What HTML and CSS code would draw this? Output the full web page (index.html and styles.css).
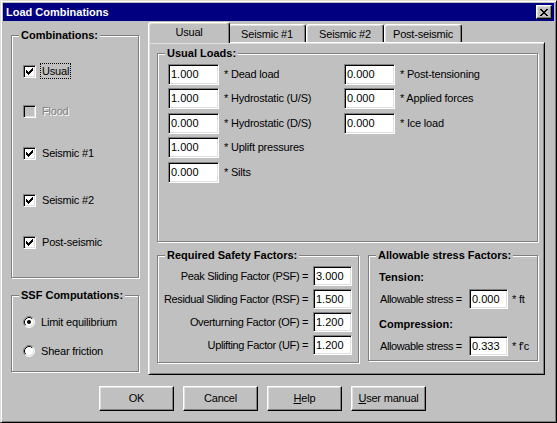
FILE: index.html
```html
<!DOCTYPE html>
<html>
<head>
<meta charset="utf-8">
<title>Load Combinations</title>
<link rel="stylesheet" href="styles.css">
</head>
<body>
<div class="window">
  <div class="titlebar">
    <span class="title">Load Combinations</span>
    <span class="close">
      <svg width="8" height="7" viewBox="0 0 8 7" shape-rendering="crispEdges">
        <rect x="0" y="0" width="2" height="1"/><rect x="6" y="0" width="2" height="1"/>
        <rect x="1" y="1" width="2" height="1"/><rect x="5" y="1" width="2" height="1"/>
        <rect x="2" y="2" width="4" height="1"/>
        <rect x="3" y="3" width="2" height="1"/>
        <rect x="2" y="4" width="4" height="1"/>
        <rect x="1" y="5" width="2" height="1"/><rect x="5" y="5" width="2" height="1"/>
        <rect x="0" y="6" width="2" height="1"/><rect x="6" y="6" width="2" height="1"/>
      </svg>
    </span>
  </div>

  <div class="main">
    <div class="left">
      <div class="group combos">
        <span class="group-label">Combinations:</span>
        <div class="crow">
          <span class="check"><svg class="tick" width="7" height="7" viewBox="0 0 7 7" shape-rendering="crispEdges"><rect x="6" y="0" width="1" height="1"/><rect x="5" y="1" width="2" height="1"/><rect x="0" y="2" width="1" height="1"/><rect x="4" y="2" width="3" height="1"/><rect x="0" y="3" width="2" height="1"/><rect x="3" y="3" width="3" height="1"/><rect x="0" y="4" width="5" height="1"/><rect x="1" y="5" width="3" height="1"/><rect x="2" y="6" width="1" height="1"/></svg></span>
          <span class="clabel focus">Usual</span>
        </div>
        <div class="crow">
          <span class="check disabled"></span>
          <span class="clabel dis">Flood</span>
        </div>
        <div class="crow">
          <span class="check"><svg class="tick" width="7" height="7" viewBox="0 0 7 7" shape-rendering="crispEdges"><rect x="6" y="0" width="1" height="1"/><rect x="5" y="1" width="2" height="1"/><rect x="0" y="2" width="1" height="1"/><rect x="4" y="2" width="3" height="1"/><rect x="0" y="3" width="2" height="1"/><rect x="3" y="3" width="3" height="1"/><rect x="0" y="4" width="5" height="1"/><rect x="1" y="5" width="3" height="1"/><rect x="2" y="6" width="1" height="1"/></svg></span>
          <span class="clabel">Seismic #1</span>
        </div>
        <div class="crow">
          <span class="check"><svg class="tick" width="7" height="7" viewBox="0 0 7 7" shape-rendering="crispEdges"><rect x="6" y="0" width="1" height="1"/><rect x="5" y="1" width="2" height="1"/><rect x="0" y="2" width="1" height="1"/><rect x="4" y="2" width="3" height="1"/><rect x="0" y="3" width="2" height="1"/><rect x="3" y="3" width="3" height="1"/><rect x="0" y="4" width="5" height="1"/><rect x="1" y="5" width="3" height="1"/><rect x="2" y="6" width="1" height="1"/></svg></span>
          <span class="clabel">Seismic #2</span>
        </div>
        <div class="crow">
          <span class="check"><svg class="tick" width="7" height="7" viewBox="0 0 7 7" shape-rendering="crispEdges"><rect x="6" y="0" width="1" height="1"/><rect x="5" y="1" width="2" height="1"/><rect x="0" y="2" width="1" height="1"/><rect x="4" y="2" width="3" height="1"/><rect x="0" y="3" width="2" height="1"/><rect x="3" y="3" width="3" height="1"/><rect x="0" y="4" width="5" height="1"/><rect x="1" y="5" width="3" height="1"/><rect x="2" y="6" width="1" height="1"/></svg></span>
          <span class="clabel">Post-seismic</span>
        </div>
      </div>

      <div class="group ssf">
        <span class="group-label">SSF Computations:</span>
        <div class="rrow">
          <svg class="radio" width="12" height="12" viewBox="0 0 12 12">
            <circle cx="6" cy="6" r="5" fill="#fff"/>
            <path d="M2.11 9.89 A5.5 5.5 0 0 1 9.89 2.11" fill="none" stroke="#808080"/>
            <path d="M9.89 2.11 A5.5 5.5 0 0 1 2.11 9.89" fill="none" stroke="#fff"/>
            <path d="M2.82 9.18 A4.5 4.5 0 0 1 9.18 2.82" fill="none" stroke="#000"/>
            <path d="M9.18 2.82 A4.5 4.5 0 0 1 2.82 9.18" fill="none" stroke="#dfdfdf"/>
            <circle cx="6" cy="6" r="2" fill="#000"/>
          </svg>
          <span class="rlabel">Limit equilibrium</span>
        </div>
        <div class="rrow">
          <svg class="radio" width="12" height="12" viewBox="0 0 12 12">
            <circle cx="6" cy="6" r="5" fill="#fff"/>
            <path d="M2.11 9.89 A5.5 5.5 0 0 1 9.89 2.11" fill="none" stroke="#808080"/>
            <path d="M9.89 2.11 A5.5 5.5 0 0 1 2.11 9.89" fill="none" stroke="#fff"/>
            <path d="M2.82 9.18 A4.5 4.5 0 0 1 9.18 2.82" fill="none" stroke="#000"/>
            <path d="M9.18 2.82 A4.5 4.5 0 0 1 2.82 9.18" fill="none" stroke="#dfdfdf"/>
          </svg>
          <span class="rlabel">Shear friction</span>
        </div>
      </div>
    </div>

    <div class="tabs">
      <div class="tabstrip">
        <span class="tab active">Usual</span>
        <span class="tab">Seismic #1</span>
        <span class="tab">Seismic #2</span>
        <span class="tab">Post-seismic</span>
      </div>
      <div class="panel">
        <div class="group loads">
          <span class="group-label">Usual Loads:</span>
          <div class="cell"><span class="edit">1.000</span><span class="lbl">* Dead load</span></div>
          <div class="cell"><span class="edit">0.000</span><span class="lbl">* Post-tensioning</span></div>
          <div class="cell"><span class="edit">1.000</span><span class="lbl">* Hydrostatic (U/S)</span></div>
          <div class="cell"><span class="edit">0.000</span><span class="lbl">* Applied forces</span></div>
          <div class="cell"><span class="edit">0.000</span><span class="lbl">* Hydrostatic (D/S)</span></div>
          <div class="cell"><span class="edit">0.000</span><span class="lbl">* Ice load</span></div>
          <div class="cell"><span class="edit">1.000</span><span class="lbl">* Uplift pressures</span></div>
          <div class="cell"></div>
          <div class="cell"><span class="edit">0.000</span><span class="lbl">* Silts</span></div>
        </div>

        <div class="lower">
          <div class="group rsf">
            <span class="group-label">Required Safety Factors:</span>
            <span class="flabel">Peak Sliding Factor (PSF) =</span><span class="edit small">3.000</span>
            <span class="flabel">Residual Sliding Factor (RSF) =</span><span class="edit small">1.500</span>
            <span class="flabel">Overturning Factor (OF) =</span><span class="edit small">1.200</span>
            <span class="flabel">Uplifting Factor (UF) =</span><span class="edit small">1.200</span>
          </div>
          <div class="group allow">
            <span class="group-label">Allowable stress Factors:</span>
            <div class="sub">Tension:</div>
            <div class="arow"><span class="alabel">Allowable stress =</span><span class="edit small">0.000</span><span class="unit">* ft</span></div>
            <div class="sub sub2">Compression:</div>
            <div class="arow"><span class="alabel">Allowable stress =</span><span class="edit small">0.333</span><span class="unit">* f'c</span></div>
          </div>
        </div>
      </div>
    </div>
  </div>

  <div class="buttons">
    <span class="btn">OK</span>
    <span class="btn">Cancel</span>
    <span class="btn"><u>H</u>elp</span>
    <span class="btn"><u>U</u>ser manual</span>
  </div>
</div>
</body>
</html>
```

FILE: styles.css
```css
* { box-sizing: border-box; }
html, body { margin: 0; padding: 0; }
body {
  font-family: "Liberation Sans", Arial, sans-serif;
  font-size: 11px;
  line-height: 13px;
  color: #000;
  background: #c0c0c0;
  width: 557px;
  height: 423px;
  overflow: hidden;
  letter-spacing: -0.2px;
}

.window {
  width: 557px;
  height: 423px;
  background: #c0c0c0;
  border: 1px solid;
  border-color: #dfdfdf #000 #000 #dfdfdf;
  box-shadow: inset 1px 1px #fff, inset -1px -1px #808080;
  padding: 2px;
  display: flex;
  flex-direction: column;
}

.titlebar {
  height: 18px;
  background: #000080;
  color: #fff;
  display: flex;
  align-items: center;
  justify-content: space-between;
  padding: 0 2px 0 3px;
}
.title { font-weight: bold; letter-spacing: 0; }
.close {
  width: 16px;
  height: 14px;
  background: #c0c0c0;
  border: 1px solid;
  border-color: #fff #000 #000 #fff;
  box-shadow: inset -1px -1px #808080, inset 1px 1px #dfdfdf;
  display: flex;
  align-items: center;
  justify-content: center;
  padding-right: 1px;
}
.close svg { fill: #000; display: block; }

.main {
  display: flex;
  margin-top: 1px;
  padding-left: 8px;
}
.left {
  width: 128px;
  margin-top: 13px;
  display: flex;
  flex-direction: column;
}

.group {
  position: relative;
  border: 1px solid #808080;
  box-shadow: inset 1px 1px #fff, 1px 1px #fff;
}
.group-label {
  position: absolute;
  top: -7px;
  left: 7px;
  padding: 0 2px;
  background: #c0c0c0;
  font-weight: bold;
  line-height: 13px;
  letter-spacing: 0;
  white-space: nowrap;
}

.combos {
  height: 243px;
  padding: 25px 0 0 11px;
  display: grid;
  grid-template-rows: 40px 42px 47px 42px 20px;
}
.crow {
  height: 20px;
  display: flex;
  align-items: center;
}
.check {
  position: relative;
  width: 13px;
  height: 13px;
  flex: none;
  background: #fff;
  border: 1px solid;
  border-color: #808080 #fff #fff #808080;
  box-shadow: inset 1px 1px #000, inset -1px -1px #dfdfdf;
}
.check.disabled { background: #c0c0c0; }
.tick {
  position: absolute;
  left: 2px;
  top: 2px;
  fill: #000;
  display: block;
}
.clabel {
  margin-left: 4px;
  padding: 0 1px;
  border: 1px dotted transparent;
  line-height: 14px;
  white-space: nowrap;
}
.clabel.focus { border-color: #000; }
.clabel.dis { color: #808080; text-shadow: 1px 1px 0 #fff; }

.ssf {
  margin-top: 17px;
  height: 77px;
  padding: 18px 0 0 11px;
  display: grid;
  grid-template-rows: 16px 16px;
  row-gap: 13px;
  align-content: start;
}
.rrow { display: flex; align-items: center; height: 16px; }
.radio { display: block; flex: none; }
.rlabel { margin-left: 6px; white-space: nowrap; }

.tabs {
  width: 397px;
  margin-left: 9px;
  display: flex;
  flex-direction: column;
}
.tabstrip {
  display: flex;
  align-items: flex-end;
  height: 20px;
  padding-left: 2px;
}
.tab {
  width: 78px;
  height: 18px;
  flex: none;
  background: #c0c0c0;
  border: 1px solid;
  border-bottom: none;
  border-color: #fff #000 #000 #fff;
  border-radius: 3px 3px 0 0;
  box-shadow: inset -1px 0 #808080, inset 1px 1px #dfdfdf;
  display: flex;
  align-items: center;
  justify-content: center;
  white-space: nowrap;
  padding-top: 1px;
}
.tab.active {
  width: 82px;
  height: 21px;
  margin: 0 -2px -1px -2px;
  position: relative;
  z-index: 1;
  padding-top: 0;
  padding-bottom: 2px;
}

.panel {
  height: 333px;
  background: #c0c0c0;
  border: 1px solid;
  border-color: #fff #000 #000 #fff;
  box-shadow: inset 1px 1px #dfdfdf, inset -1px -1px #808080;
  padding: 10px 6px 0 8px;
  display: flex;
  flex-direction: column;
}

.loads {
  height: 189px;
  padding: 10px 0 0 10px;
  display: grid;
  grid-template-columns: 176px auto;
  grid-auto-rows: 21px;
  row-gap: 3.4px;
  align-content: start;
}
.cell { display: flex; align-items: center; }
.edit {
  width: 51px;
  height: 21px;
  flex: none;
  background: #fff;
  border: 1px solid;
  border-color: #808080 #fff #fff #808080;
  box-shadow: inset 1px 1px #000, inset -1px -1px #dfdfdf;
  padding-left: 2px;
  display: flex;
  align-items: center;
  letter-spacing: 0;
}
.edit.small { width: 39px; height: 20px; }
.lbl { margin-left: 5px; white-space: nowrap; }

.lower {
  display: flex;
  align-items: flex-start;
  margin-top: 13px;
}
.rsf {
  width: 202px;
  height: 108px;
  padding: 10px 6px 0 0;
  display: grid;
  grid-template-columns: 1fr 39px;
  grid-auto-rows: 20px;
  column-gap: 5px;
  row-gap: 3px;
  align-content: start;
}
.flabel {
  text-align: right;
  align-self: center;
  white-space: nowrap;
  letter-spacing: -0.35px;
}

.allow {
  width: 170px;
  height: 106px;
  margin-left: 9px;
  padding: 15px 0 0 10px;
  display: flex;
  flex-direction: column;
}
.sub { font-weight: bold; line-height: 13px; letter-spacing: 0; }
.sub2 { margin-top: 9px; }
.arow {
  display: flex;
  align-items: center;
  margin-top: 5px;
  padding-left: 1px;
}
.alabel { width: 89px; flex: none; white-space: nowrap; letter-spacing: -0.4px; }
.unit { margin-left: 4px; white-space: nowrap; }

.buttons {
  display: flex;
  gap: 9px;
  margin-top: 11px;
  padding-left: 96px;
}
.btn {
  width: 75px;
  height: 25px;
  border: 1px solid;
  border-color: #fff #000 #000 #fff;
  box-shadow: inset -1px -1px #808080, inset 1px 1px #dfdfdf;
  display: flex;
  align-items: center;
  justify-content: center;
  white-space: nowrap;
}
```
